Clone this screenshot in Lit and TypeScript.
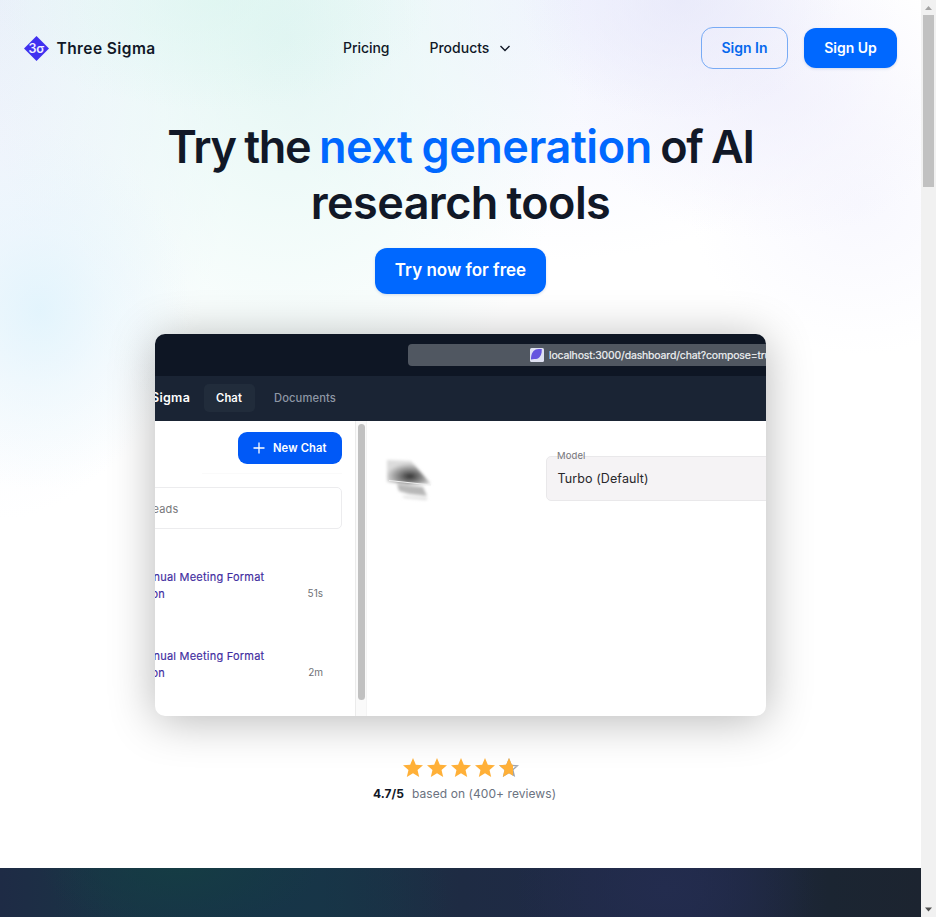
import { LitElement, html, css, svg } from "lit";
import { customElement, property } from "lit/decorators.js";

const STAR = "M12 17.27L18.18 21l-1.64-7.03L22 9.24l-7.19-.61L12 2 9.19 8.63 2 9.24l5.46 4.73L5.82 21z";

@customElement("star-rating")
class StarRating extends LitElement {
  @property({ type: Number }) value = 4.7;
  static styles = css`
    :host { display: flex; justify-content: center; height: 24px; }
    svg { display: block; }
    .empty { fill: #fff; stroke: #9fa5ad; stroke-width: 2.8; }
    .full { fill: #ffb038; }
  `;
  render() {
    return [0, 1, 2, 3, 4].map((i) => {
      const whole = this.value - i >= 1;
      return html`<svg width="24" height="24" viewBox="0 0 24 24">
        ${whole
          ? svg`<path class="full" d=${STAR}></path>`
          : svg`<defs>
              <clipPath id="shape"><path d=${STAR}></path></clipPath>
              <clipPath id="part"><rect width="16" height="24"></rect></clipPath>
            </defs>
            <path class="empty" d=${STAR} clip-path="url(#shape)"></path>
            <path class="full" d=${STAR} clip-path="url(#part)"></path>`}
      </svg>`;
    });
  }
}

@customElement("chat-preview")
class ChatPreview extends LitElement {
  static styles = css`
    :host { display: block; width: 611px; height: 382px; border-radius: 10px; overflow: hidden; background: #fff; font-family: Inter, "Liberation Sans", sans-serif; white-space: nowrap; }
    .bar { height: 41.5px; background: #0e1624; display: flex; box-sizing: border-box; padding: 9.5px 0 0 253px; }
    .address { flex: none; width: 380px; height: 22.5px; border-radius: 4px; background: #505761; display: flex; align-items: center; box-sizing: border-box; padding-left: 122px; color: #f2f4f6; font-size: 10.5px; -webkit-text-stroke: 0.15px #f2f4f6; }
    .address svg { flex: none; margin-right: 5px; }
    .url { letter-spacing: -0.16px; padding-top: 1.5px; }
    .tabs { height: 45.5px; background: #1a2434; display: flex; align-items: center; box-sizing: border-box; padding-bottom: 1px; font-size: 11.2px; }
    .brand { width: 48px; margin-left: -4px; color: #fff; font-weight: 600; font-size: 12.5px; letter-spacing: 0.3px; }
    .tab { width: 51px; height: 28px; margin-left: 5px; border-radius: 5px; background: #212c3b; color: #fff; font-weight: 600; letter-spacing: 0.1px; display: flex; align-items: center; justify-content: center; box-sizing: border-box; padding-right: 1px; }
    .tab2 { margin-left: 19px; color: #8e97a5; font-weight: 500; letter-spacing: 0.1px; }
    .body { display: flex; height: 295px; }
    .side { width: 200px; flex: none; overflow: hidden; }
    .new { margin: 11px 0 0 83px; width: 104px; height: 32px; border-radius: 9px; background: #0059f7; color: #fff; font-size: 11.2px; font-weight: 600; letter-spacing: 0.12px; display: flex; align-items: center; box-sizing: border-box; padding-left: 15px; }
    .new svg { margin-right: 8px; }
    .rule { height: 1px; width: 140px; margin: 9px 0 0 47px; background: #fafafa; }
    .search { box-sizing: border-box; width: 197px; margin: 13px 0 0 -10px; height: 42px; border: 1px solid #ececee; border-radius: 5px; display: flex; align-items: center; padding: 2px 0 0 6.5px; color: #77777a; font-size: 11px; letter-spacing: 0.2px; }
    .thread { height: 79.4px; position: relative; top: 40px; color: #3f2d9f; font-size: 11px; line-height: 17px; display: grid; grid-template-columns: 1fr 33px; letter-spacing: 0.22px; -webkit-text-stroke: 0.15px #3f2d9f; }
    .label { margin-left: -1.5px; }
    .label2 { display: block; margin-left: -3.5px; }
    .time { color: #707175; font-size: 10px; letter-spacing: 0; padding-top: 16px; -webkit-text-stroke: 0; width: 1px; direction: rtl; }
    .rail { width: 12px; flex: none; box-sizing: border-box; border-left: 1px solid #ebebeb; border-right: 1px solid #f4f4f4; background: #fafafa; padding: 3px 0 0 2px; }
    .thumb { width: 7px; height: 276px; border-radius: 4px; background: #c1c1c1; }
    .main { flex: 1; display: flex; align-items: flex-start; overflow: hidden; }
    .smudge { margin: 32px 0 0 14px; width: 60px; flex: none; }
    .field { box-sizing: border-box; position: relative; flex: none; width: 300px; height: 45px; margin: 35px 0 0 104.5px; background: #f5f3f5; border: 1px solid #e9e8ea; border-radius: 5px; padding: 13px 0 0 11px; font-size: 12.5px; letter-spacing: 0.1px; color: #28272b; line-height: 18px; }
    .legend { position: absolute; left: 10.5px; top: -8px; font-size: 9.5px; letter-spacing: 0.1px; line-height: 13px; color: #757579; }
  `;
  render() {
    const threads = ["51s", "2m"];
    return html`
      <div class="bar"><div class="address">
        <svg width="14" height="14" viewBox="0 0 14 14"><rect width="14" height="14" rx="1.5" fill="#dfe2f3"/><path d="M1 11.500C1 5 3.500 2 7 1.300C9 .9 10.500 1 11.800 1C12 6 10.500 9 8 10.500C5.500 11.500 3 10.800 1 11.500Z" fill="#6655df"/></svg>
        <span class="url">localhost:3000/dashboard/chat?compose=true</span></div></div>
      <div class="tabs"><span class="brand">Sigma</span><span class="tab">Chat</span><span class="tab2">Documents</span></div>
      <div class="body">
        <div class="side">
          <div class="new"><svg width="12" height="12" viewBox="0 0 12 12"><path d="M6 .5v11M.5 6h11" stroke="#fff" stroke-width="1.3"/></svg>New Chat</div>
          <div class="rule"></div>
          <div class="search">eads</div>
          ${threads.map((t) => html`<div class="thread"><div><span class="label">nual Meeting Format</span><span class="label2">on</span></div><span class="time">${t}</span></div>`)}
        </div>
        <div class="rail"><div class="thumb"></div></div>
        <div class="main">
          <svg class="smudge" width="60" height="60" viewBox="0 0 60 60">
            <defs>
              <radialGradient id="g" cx=".52" cy=".68" r=".55"><stop offset="0" stop-color="#303030"/><stop offset=".45" stop-color="#808080"/><stop offset="1" stop-color="#dcdcdc"/></radialGradient>
              <filter id="soft" x="-20%" y="-20%" width="140%" height="140%"><feGaussianBlur stdDeviation="1.5"/></filter>
            </defs>
            <g filter="url(#soft)">
              <path d="M6 7L30 8L43 23L50 31L27 31L6 29Z" fill="url(#g)"/>
              <path d="M16 31L42 34L46 43L28 41L18 38Z" fill="#b8b8b8"/>
              <path d="M20 43L47 45L45 47L24 45Z" fill="#d8d8d8"/>
            </g>
            <path d="M8 27.500L50 32" stroke="#eee" stroke-width="1.200"/>
          </svg>
          <div class="field"><span class="legend">Model</span>Turbo (Default)</div>
        </div>
      </div>`;
  }
}

@customElement("app-root")
class AppRoot extends LitElement {
  static styles = css`
    :host { display: grid; grid-template-columns: 921px 15px; width: 936px; height: 917px; overflow: hidden; background: #fff; font-family: Inter, "Liberation Sans", sans-serif; color: #111827; white-space: nowrap; }
    .page { height: 917px; overflow: hidden; }
    .hero { height: 868px; background:
      radial-gradient(ellipse 150px 180px at 40px 310px, rgba(222,243,252,.8), rgba(228,245,252,.45) 45%, rgba(255,255,255,0)),
      radial-gradient(ellipse 220px 110px at 215px 0px, rgba(214,244,237,.5), rgba(255,255,255,0)),
      radial-gradient(ellipse 300px 400px at 285px 40px, rgba(222,244,241,.8), rgba(230,248,245,.55) 45%, rgba(255,255,255,0)),
      radial-gradient(ellipse 160px 120px at 680px 0px, rgba(229,230,249,.7), rgba(255,255,255,0)),
      radial-gradient(ellipse 200px 150px at 770px 90px, rgba(240,239,252,.8), rgba(255,255,255,0)),
      radial-gradient(ellipse 170px 150px at 860px 205px, rgba(246,246,254,.8), rgba(255,255,255,0)),
      radial-gradient(ellipse 340px 260px at 560px 0px, rgba(241,243,254,1), rgba(255,255,255,0)),
      radial-gradient(ellipse 250px 520px at 0px 0px, rgba(234,240,250,1), rgba(242,246,253,.85) 50%, rgba(255,255,255,0)),
      #fff; }
    header { height: 96px; display: flex; align-items: center; box-sizing: border-box; padding: 0 24px; }
    .logo { display: flex; align-items: center; width: 319px; gap: 7.5px; font-size: 15.5px; font-weight: 600; }
    .wordmark { letter-spacing: 0.42px; }
    .glyph { font-size: 12.5px; font-weight: 600; fill: #f0efff; letter-spacing: -.3px; }
    nav { display: flex; align-items: center; font-size: 14px; font-weight: 500; flex: 1; letter-spacing: -0.05px; padding-bottom: 1px; }
    .products { margin-left: 40px; margin-right: 9px; letter-spacing: 0; }
    .btn { display: flex; align-items: center; justify-content: center; box-sizing: border-box; border-radius: 12px; font-size: 14px; font-weight: 600; padding-bottom: 1px; }
    .in { width: 87px; height: 42px; border: 1px solid #78abf5; color: #0668ed; margin-right: 16px; }
    .up { width: 93px; height: 40px; background: #0068ff; color: #fff; box-shadow: 0 1px 3px rgba(20,60,140,.16); }
    h1 { margin: 23px 0 0; text-align: center; font-size: 45px; line-height: 56px; font-weight: 600; letter-spacing: -0.6px; word-spacing: -2px; padding-bottom: 1px; }
    .tight { letter-spacing: -1.3px; word-spacing: -1.5px; }
    .accent { color: #0068ff; letter-spacing: -0.45px; }
    .cta { margin: 16px auto 0; width: 171px; height: 46px; background: #0068ff; color: #fff; font-size: 17px; padding-bottom: 2px; box-shadow: 0 1px 3px rgba(20,60,140,.16); }
    chat-preview { margin: 40px 0 0 155px; box-shadow: 0 4px 46px rgba(0,0,0,.29); }
    star-rating { margin-top: 40px; }
    .reviews { display: flex; justify-content: center; gap: 8px; padding-left: 8px; margin-top: 4px; font-size: 12px; line-height: 20px; color: #6b7280; letter-spacing: 0.07px; }
    .score { color: #111827; font-weight: 700; }
    .next { height: 49px; background:
      radial-gradient(ellipse 140px 60px at 180px 0px, #153c44, transparent),
      radial-gradient(ellipse 200px 120px at 250px 30px, #163548, transparent),
      radial-gradient(ellipse 150px 100px at 665px 20px, #232c4e, transparent),
      linear-gradient(90deg, #1e2b45, #193545 15%, #193546 35%, #1e2b43 50%, #202948 75%, #1b2532 90%, #1c2430); }
    .scroll { background: #f1f1f1; display: flex; flex-direction: column; align-items: center; }
    .scroll .thumb { width: 11px; height: 172px; background: #c1c1c1; }
    .scroll svg { display: block; flex: none; }
    .gap { flex: 1; }
  `;
  render() {
    return html`
      <div class="page">
        <section class="hero">
          <header>
            <div class="logo">
              <svg width="25" height="25" viewBox="0 0 25 25"><path d="M12.500 0L25 12.500L12.500 25L0 12.500Z" fill="#4030f0"/><text class="glyph" x="12.200" y="16.600" text-anchor="middle">3σ</text></svg>
              <span class="wordmark">Three Sigma</span>
            </div>
            <nav><span>Pricing</span><span class="products">Products</span>
              <svg width="14" height="14" viewBox="0 0 14 14"><path d="M2.500 5L7 9.500L11.500 5" fill="none" stroke="#111827" stroke-width="1.400"/></svg>
            </nav>
            <span class="btn in">Sign In</span><span class="btn up">Sign Up</span>
          </header>
          <h1><span class="tight">Try the </span><span class="accent">next generation</span><span class="tight"> of AI</span><br>research tools</h1>
          <div class="btn cta">Try now for free</div>
          <chat-preview></chat-preview>
          <star-rating .value=${4.7}></star-rating>
          <div class="reviews"><span class="score">4.7/5</span><span>based on (400+ reviews)</span></div>
        </section>
        <section class="next"></section>
      </div>
      <div class="scroll">
        <svg width="15" height="15"><path d="M4 10h7L7.500 6z" fill="#a3a3a3"/></svg>
        <div class="thumb"></div><div class="gap"></div>
        <svg width="15" height="15"><path d="M4 5.500h7L7.500 9.500z" fill="#505050"/></svg>
      </div>`;
  }
}
